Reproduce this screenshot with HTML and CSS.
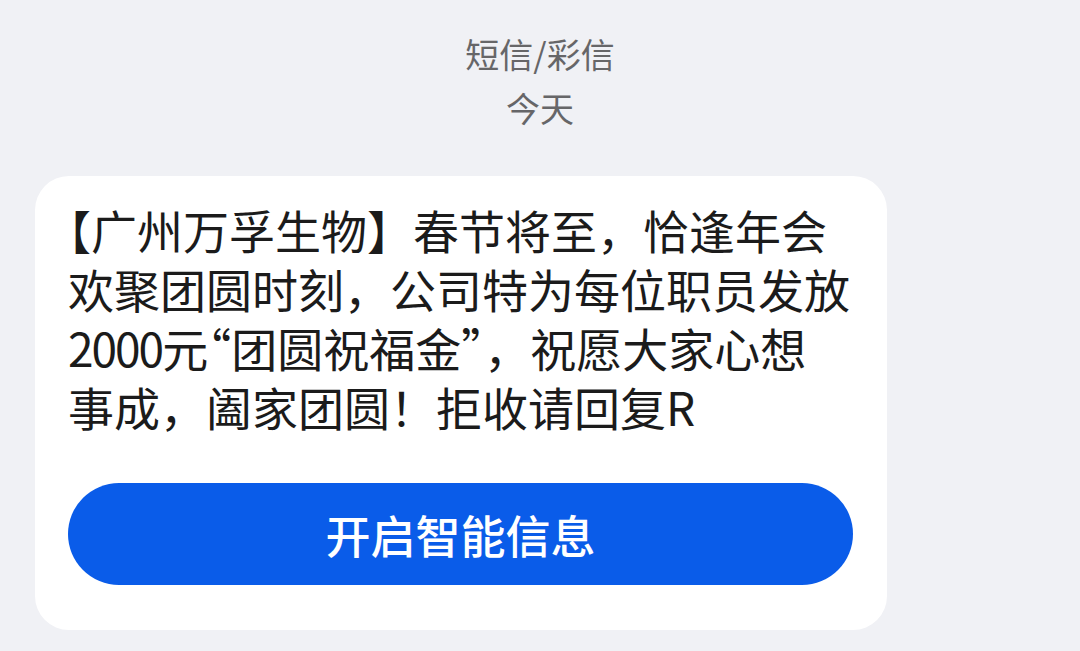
FILE: index.html
```html
<!DOCTYPE html>
<html lang="zh-CN">
<head>
<meta charset="utf-8">
<link rel="stylesheet" href="styles.css">
</head>
<body>
<div class="screen">
  <header class="meta">
    <div class="meta-type">短信/彩信</div>
    <div class="meta-date">今天</div>
  </header>
  <div class="bubble">
    <p class="msg"><span class="halt">【</span>广州万孚生物】春节将至，恰逢年会<br>欢聚团圆时刻，公司特为每位职员发放<br><span class="num">2000</span>元<span class="halt">“</span>团圆祝福金<span class="halt">”</span>，祝愿大家心想<br>事成，阖家团圆！拒收请回复R</p>
    <div class="action">开启智能信息</div>
  </div>
</div>
</body>
</html>
```

FILE: styles.css
```css
* { box-sizing: border-box; }
html, body {
  margin: 0;
  padding: 0;
  background: #f0f1f5;
}
body {
  width: 1080px;
  height: 651px;
  overflow: hidden;
  font-family: "Noto Sans CJK SC", "Noto Sans", sans-serif;
}
.screen {
  display: flex;
  flex-direction: column;
}
.meta {
  display: flex;
  flex-direction: column;
  align-items: center;
  padding-top: 27px;
  color: #666668;
  font-size: 34px;
  line-height: 54px;
}
.meta-type { height: 54px; }
.meta-date { height: 54px; }
.bubble {
  margin: 41px 0 0 35px;
  width: 852px;
  background: #ffffff;
  border-radius: 34px;
  padding: 24px 34px 45px 33px;
}
.msg {
  margin: 0;
  font-size: 46px;
  line-height: 59px;
  color: #1b1b1b;
  white-space: nowrap;
}
.halt {
  font-feature-settings: "halt";
}
.num {
  letter-spacing: -2px;
}
.action {
  margin-top: 47px;
  height: 102px;
  border-radius: 51px;
  background: #0a5ce9;
  color: #ffffff;
  font-size: 45px;
  font-weight: 500;
  display: flex;
  align-items: center;
  justify-content: center;
}
```
